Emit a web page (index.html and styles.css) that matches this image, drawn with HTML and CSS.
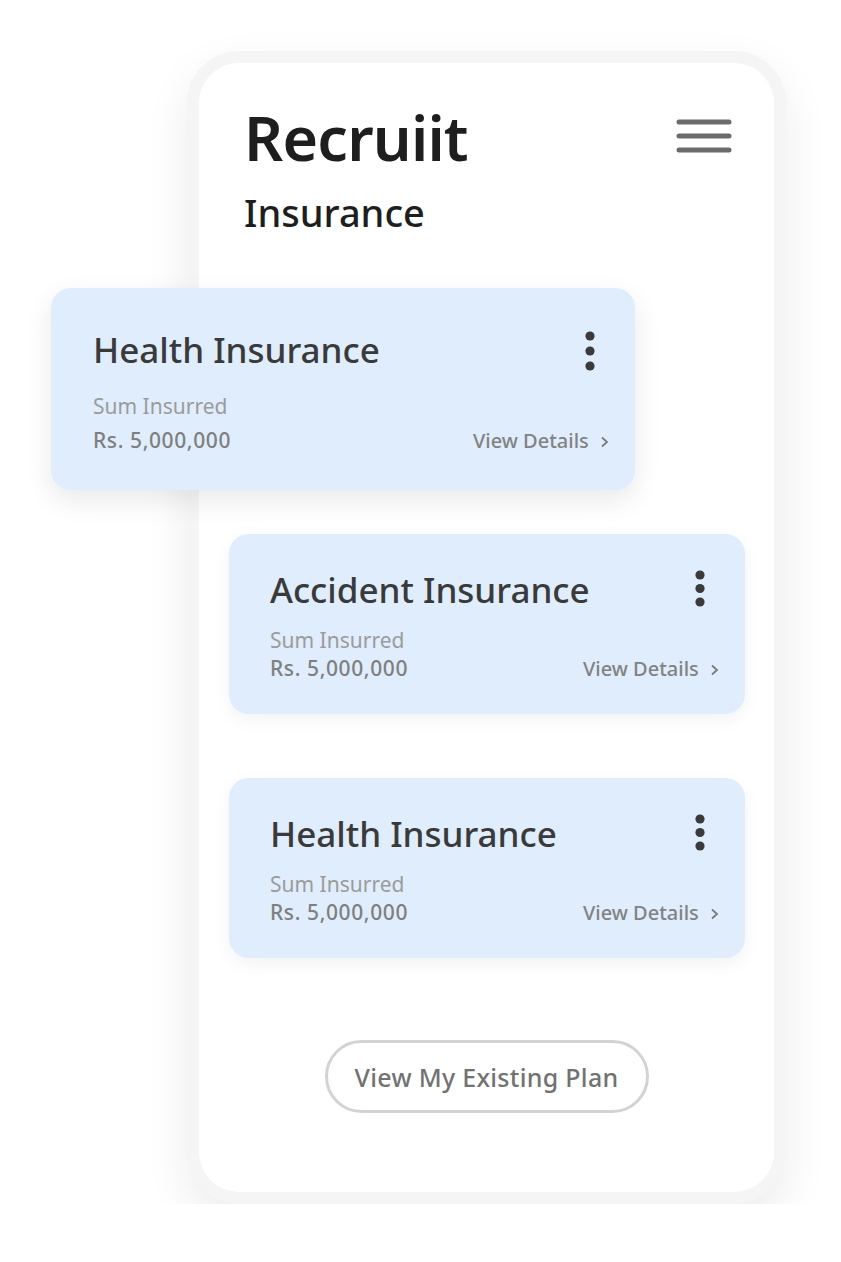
FILE: index.html
```html
<!DOCTYPE html>
<html lang="en">

<head>
    <meta charset="UTF-8">
    <meta name="viewport" content="width=device-width, initial-scale=1.0">
    <title>Recruiit - Insurance</title>
    <link rel="stylesheet" href="styles.css">
</head>

<body>
    <div class="phone">
        <!-- top bar -->
        <div class="header">
            <div>
                <h1 class="brand">Recruiit</h1>
                <h2 class="page-title">Insurance</h2>
            </div>
            <svg class="menu" width="56" height="34" viewBox="0 0 56 34">
                <g stroke="#6b6b6b" stroke-width="5" stroke-linecap="round">
                    <line x1="3" y1="3" x2="53" y2="3" />
                    <line x1="3" y1="17" x2="53" y2="17" />
                    <line x1="3" y1="31" x2="53" y2="31" />
                </g>
            </svg>
        </div>

        <!-- plan cards -->
        <div class="card card-main">
            <div class="card-top">
                <h3>Health Insurance</h3>
                <svg class="dots" width="40" height="40" viewBox="0 0 40 40">
                    <circle cx="20" cy="5" r="4.6" fill="#3a3a3a" />
                    <circle cx="20" cy="20" r="4.6" fill="#3a3a3a" />
                    <circle cx="20" cy="35" r="4.6" fill="#3a3a3a" />
                </svg>
            </div>
            <p class="label">Sum Insurred</p>
            <div class="card-bottom">
                <span class="amount">Rs. 5,000,000</span>
                <a href="#" class="details">View Details
                    <svg width="10" height="12" viewBox="0 0 10 12"><path d="M2 1.5 L7 6 L2 10.5" fill="none" stroke="#7a7a7a" stroke-width="1.8" /></svg>
                </a>
            </div>
        </div>

        <div class="card card-small">
            <div class="card-top">
                <h3>Accident Insurance</h3>
                <svg class="dots" width="40" height="40" viewBox="0 0 40 40">
                    <circle cx="20" cy="5" r="4.6" fill="#3a3a3a" />
                    <circle cx="20" cy="18.5" r="4.6" fill="#3a3a3a" />
                    <circle cx="20" cy="32" r="4.6" fill="#3a3a3a" />
                </svg>
            </div>
            <p class="label">Sum Insurred</p>
            <div class="card-bottom">
                <span class="amount">Rs. 5,000,000</span>
                <a href="#" class="details">View Details
                    <svg width="10" height="12" viewBox="0 0 10 12"><path d="M2 1.5 L7 6 L2 10.5" fill="none" stroke="#7a7a7a" stroke-width="1.8" /></svg>
                </a>
            </div>
        </div>

        <div class="card card-small last">
            <div class="card-top">
                <h3>Health Insurance</h3>
                <svg class="dots" width="40" height="40" viewBox="0 0 40 40">
                    <circle cx="20" cy="5" r="4.6" fill="#3a3a3a" />
                    <circle cx="20" cy="18.5" r="4.6" fill="#3a3a3a" />
                    <circle cx="20" cy="32" r="4.6" fill="#3a3a3a" />
                </svg>
            </div>
            <p class="label">Sum Insurred</p>
            <div class="card-bottom">
                <span class="amount">Rs. 5,000,000</span>
                <a href="#" class="details">View Details
                    <svg width="10" height="12" viewBox="0 0 10 12"><path d="M2 1.5 L7 6 L2 10.5" fill="none" stroke="#7a7a7a" stroke-width="1.8" /></svg>
                </a>
            </div>
        </div>

        <div class="actions">
            <button class="plan-btn">View My Existing Plan</button>
        </div>
    </div>
</body>

</html>
```

FILE: styles.css
```css
body {
    margin: 0;
    background-color: #fff;
    font-family: "Noto Sans", "Open Sans", sans-serif;
}

/* phone frame */
.phone {
    box-sizing: border-box;
    width: 599px;
    height: 1153px;
    margin: 51px 0 0 187px;
    padding: 0 30px;
    background-color: #fff;
    border: 12px solid #f5f5f5;
    border-radius: 52px;
    box-shadow: 0 18px 45px rgba(0, 0, 0, 0.08);
}

.header {
    display: flex;
    justify-content: space-between;
    align-items: flex-start;
    padding: 44px 12px 0 15px;
}

.brand {
    margin: 0;
    font-size: 61px;
    line-height: 62px;
    font-weight: 600;
    letter-spacing: -0.8px;
    color: #1e1e1e;
}

.page-title {
    margin: 24px 0 0;
    font-size: 38px;
    line-height: 38px;
    font-weight: 500;
    color: #1e1e1e;
}

.menu {
    display: block;
    margin-top: 12px;
}

/* cards */
.card {
    box-sizing: border-box;
    background-color: #e0edfd;
    border-radius: 20px;
}

.card-main {
    width: 584px;
    margin: 57px 0 0 -178px;
    padding: 44px 25px 39px 42px;
    box-shadow: 0 10px 28px rgba(0, 0, 0, 0.09);
}

.card-small {
    width: 516px;
    margin-top: 44px;
    padding: 38px 25px 35px 41px;
    box-shadow: 0 6px 18px rgba(0, 0, 0, 0.05);
}

.card-small.last {
    margin-top: 64px;
}

.card-top {
    display: flex;
    justify-content: space-between;
    align-items: flex-start;
}

.card h3 {
    margin: 0;
    font-size: 35px;
    line-height: 35px;
    font-weight: 500;
    color: #3a3a3a;
}

.dots {
    display: block;
    margin-top: -1px;
}

.card-small .dots {
    margin-top: -2px;
}

.label {
    margin: 25px 0 0;
    font-size: 21px;
    line-height: 21px;
    color: #9b9b9b;
}

.card-small .label {
    margin-top: 20px;
}

.card-bottom {
    display: flex;
    justify-content: space-between;
    align-items: baseline;
    margin-top: 13px;
}

.card-small .card-bottom {
    margin-top: 7px;
}

.amount {
    font-size: 21px;
    line-height: 21px;
    font-weight: 500;
    letter-spacing: 0.6px;
    color: #7f7f7f;
}

.details {
    font-size: 20px;
    line-height: 21px;
    font-weight: 500;
    color: #828282;
    text-decoration: none;
}

.details svg {
    margin-left: 6px;
}

/* bottom button */
.actions {
    display: flex;
    justify-content: center;
    margin-top: 82px;
}

.plan-btn {
    width: 324px;
    height: 73px;
    background-color: #fff;
    border: 3px solid #d3d3d3;
    border-radius: 37px;
    font-family: "Noto Sans", "Open Sans", sans-serif;
    font-size: 25px;
    font-weight: 500;
    letter-spacing: 0.3px;
    color: #727272;
    cursor: pointer;
}
```
